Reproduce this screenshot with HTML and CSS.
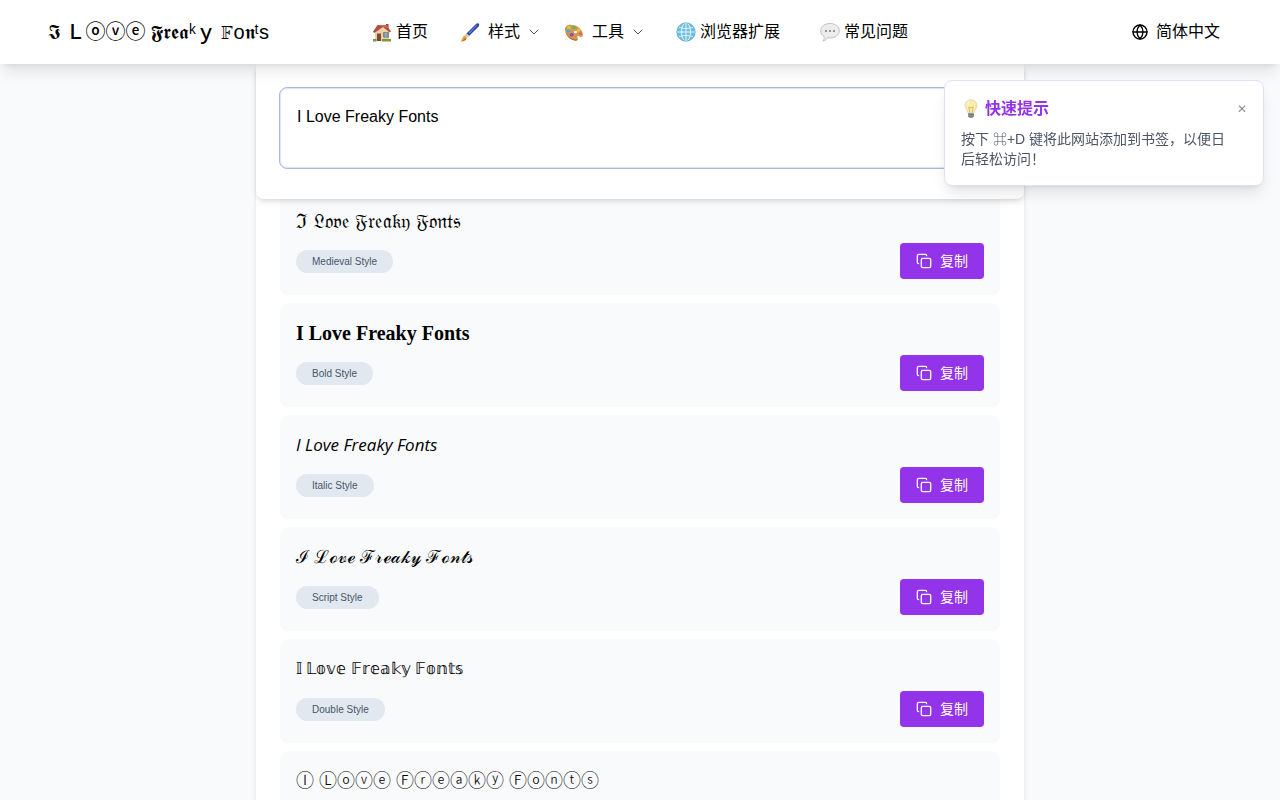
FILE: index.html
```
<!DOCTYPE html>
<html lang="zh-CN">
<head>
  <meta charset="UTF-8">
  <meta name="viewport" content="width=device-width, initial-scale=1.0">
  <title>I Love Freaky Fonts</title>
  <link rel="stylesheet" href="styles.css">
</head>
<body>
  <svg class="sprite" width="0" height="0" aria-hidden="true">
    <symbol id="copy" viewBox="0 0 24 24">
      <rect x="8" y="8" width="14" height="14" rx="2"/>
      <path d="M4 16c-1.1 0-2-.9-2-2V4c0-1.1.9-2 2-2h10c1.1 0 2 .9 2 2"/>
    </symbol>
    <symbol id="chevron" viewBox="0 0 24 24">
      <path d="m4 8 8 8 8-8"/>
    </symbol>
  </svg>

  <header class="header">
    <a class="logo" href="#">𝕴 Ｌⓞⓥⓔ 𝕱𝖗𝖊𝖆ᵏｙ 𝔽o𝖓ᵗs</a>
    <nav class="nav">
      <a class="nav-link" href="#">
        <svg class="emoji" viewBox="0 0 20 20">
          <path fill="#83503f" d="M14 2h2.500v5H14z"/>
          <path fill="#e9d1ab" d="M3 9 9.500 3 17 9v10H3z"/>
          <path fill="#b94b3e" d="M1 9.800 5.500 3h9L19 9.600l-1.200.9L11 5 2.200 11z"/>
          <path fill="#d66b55" d="M5.500 3h9l2 3.200-4-1.200z"/>
          <path fill="#7e4838" d="M5 11.500h4V19H5z"/>
          <path fill="#719aaa" stroke="#806b60" stroke-width=".7" d="M11.500 10.500h5v4.700h-5z"/>
          <path stroke="#d8c9ad" stroke-width=".7" d="M14 10.500v4.700"/>
          <path fill="#789746" d="M1 17h3.500v2.500H1zM10 17h9v2.500h-9z"/>
        </svg>
        首页
      </a>
      <button class="nav-btn" type="button">
        <svg class="emoji" viewBox="0 0 20 20">
          <path fill="#263e9b" d="M6.500 11.500 16 2c1.300-1.200 3.300-.7 3.200 1-.1.900-.6 1.500-1.400 2.300L9 14z"/>
          <path fill="#6682dc" d="m8.500 10.800 7.700-7.700c.8-.7 1.600-.6 1.300 0L9.500 12z"/>
          <path fill="#c9c5bc" d="m4.700 13.200 2-2 2.500 2.500-2 2z"/>
          <path fill="#e8a33c" d="M.8 19.200c1.300-1.300 1.200-4.500 3.900-5.800l2.400 2.400C6 18.500 3.200 19.400.8 19.200z"/>
          <path fill="#b86c20" d="M.8 19.200c1.900-.4 3.200-1.600 4.200-3.400l1.400 1.400c-1.600 1.700-3.500 2.200-5.600 2z"/>
        </svg>
        <span>样式</span>
        <svg class="chevron"><use href="#chevron"/></svg>
      </button>
      <button class="nav-btn" type="button">
        <svg class="emoji" viewBox="0 0 20 20">
          <path fill="#d7954f" d="M1 8C.5 3 6 1.700 10.500 3.300c4.700 1.500 8.600 5.700 8.400 9.500-.1 2.400-2 2.700-3.400 1.700-1.500-1-2.700-.2-2 1.300.9 2-.5 3.200-2.800 2.800C5.600 17.800 1.600 13 1 8z"/>
          <path fill="#ae6c35" d="M1 8c1 4.500 5 8.600 10 9.400 1.200.2 2.200-.1 2.700-.6.100 1.500-1.200 2.100-3 1.800C5.600 17.800 1.600 13 1 8z"/>
          <ellipse cx="5" cy="5.500" rx="2" ry="1.500" fill="#bbd546"/>
          <ellipse cx="10" cy="5.500" rx="2" ry="1.400" fill="#5bb568"/>
          <ellipse cx="4.300" cy="9" rx="1.800" ry="1.500" fill="#42aed3"/>
          <ellipse cx="7.700" cy="12.700" rx="2" ry="1.700" fill="#8a4bb4"/>
          <ellipse cx="14.500" cy="8.300" rx="1.700" ry="1.300" fill="#e9ca42"/>
          <ellipse cx="16.500" cy="11.700" rx="1.300" ry="1.100" fill="#db5746"/>
          <ellipse cx="11.500" cy="10" rx="1.700" ry="1.300" fill="#fff"/>
        </svg>
        <span>工具</span>
        <svg class="chevron"><use href="#chevron"/></svg>
      </button>
      <a class="nav-link" href="#">
        <svg class="emoji" viewBox="0 0 20 20">
          <circle cx="10" cy="10" r="9.200" fill="#70bde0"/>
          <g fill="none" stroke="#e3f5fb" stroke-width="1">
            <ellipse cx="10" cy="10" rx="4.500" ry="9"/>
            <path d="M10 1v18M1 10h18M3 5c4 2 10 2 14 0M3 15c4-2 10-2 14 0"/>
          </g>
          <circle cx="10" cy="10" r="9.200" fill="none" stroke="#4f9fc4" stroke-width=".7"/>
        </svg>
        浏览器扩展
      </a>
      <a class="nav-link" href="#">
        <svg class="emoji" viewBox="0 0 20 20">
          <path fill="#ececec" stroke="#b3b3b3" stroke-width=".8" d="M10 1.500c5.200 0 9.300 3 9.300 7.200s-4 7.300-9.300 7.300c-.9 0-1.700-.1-2.500-.3-1 1.800-2.600 3-4.300 3.200.9-1.200 1.200-2.700.8-4.500C2 13.200.7 11.200.7 8.700.700 4.500 4.800 1.500 10 1.500z"/>
          <g fill="#777"><circle cx="6" cy="9" r="1"/><circle cx="10" cy="9" r="1"/><circle cx="14" cy="9" r="1"/></g>
        </svg>
        常见问题
      </a>
    </nav>
    <button class="lang" type="button">
      <svg class="icon" viewBox="0 0 24 24">
        <circle cx="12" cy="12" r="10.500"/>
        <path d="M1.500 12h21M12 1.500c6 6 6 15 0 21-6-6-6-15 0-21"/>
      </svg>
      简体中文
    </button>
  </header>

  <main class="container">
    <div class="input-panel">
      <textarea class="input" aria-label="输入文字">I Love Freaky Fonts</textarea>
    </div>
    <div class="results">
      <div class="result">
        <p class="preview fraktur">ℑ 𝔏𝔬𝔳𝔢 𝔉𝔯𝔢𝔞𝔨𝔶 𝔉𝔬𝔫𝔱𝔰</p>
        <div class="row">
          <span class="tag">Medieval Style</span>
          <button class="copy" type="button"><svg class="icon"><use href="#copy"/></svg>复制</button>
        </div>
      </div>
      <div class="result">
        <p class="preview bold">I Love Freaky Fonts</p>
        <div class="row">
          <span class="tag">Bold Style</span>
          <button class="copy" type="button"><svg class="icon"><use href="#copy"/></svg>复制</button>
        </div>
      </div>
      <div class="result">
        <p class="preview italic">I Love Freaky Fonts</p>
        <div class="row">
          <span class="tag">Italic Style</span>
          <button class="copy" type="button"><svg class="icon"><use href="#copy"/></svg>复制</button>
        </div>
      </div>
      <div class="result">
        <p class="preview script">ℐ ℒℴ𝓋ℯ ℱ𝓇ℯ𝒶𝓀𝓎 ℱℴ𝓃𝓉𝓈</p>
        <div class="row">
          <span class="tag">Script Style</span>
          <button class="copy" type="button"><svg class="icon"><use href="#copy"/></svg>复制</button>
        </div>
      </div>
      <div class="result">
        <p class="preview double">𝕀 𝕃𝕠𝕧𝕖 𝔽𝕣𝕖𝕒𝕜𝕪 𝔽𝕠𝕟𝕥𝕤</p>
        <div class="row">
          <span class="tag">Double Style</span>
          <button class="copy" type="button"><svg class="icon"><use href="#copy"/></svg>复制</button>
        </div>
      </div>
      <div class="result">
        <p class="preview circled">Ⓘ Ⓛⓞⓥⓔ Ⓕⓡⓔⓐⓚⓨ Ⓕⓞⓝⓣⓢ</p>
        <div class="row">
          <span class="tag">Circled Style</span>
          <button class="copy" type="button"><svg class="icon"><use href="#copy"/></svg>复制</button>
        </div>
      </div>
    </div>
  </main>

  <aside class="tip">
    <div class="tip-head">
      <svg class="emoji" viewBox="0 0 20 20">
        <path fill="#f8edae" stroke="#d8ce9a" stroke-width=".7" d="M10 .7c3.500 0 6 2.500 6 5.800 0 3-2.600 4.300-3 7.500H7c-.4-3.200-3-4.500-3-7.500C4 3.200 6.500.7 10 .7z"/>
        <path fill="none" stroke="#d8ac48" stroke-width=".8" d="M8.800 13.500 7.800 8l1.400 1 .8-1 .8 1 1.400-1-1 5.500"/>
        <path fill="#fffbe5" d="M6 5c.5-1.800 1.700-2.700 3-2.900C8 3.200 7.500 4.500 7.200 6.500z"/>
        <path fill="#949a9b" d="M7.200 14h5.600v3.500L11.500 19h-3l-1.300-1.500z"/>
        <path stroke="#5f6566" stroke-width=".7" d="M7.200 15.500h5.600M7.200 17.200h5.600"/>
      </svg>
      <h2 class="tip-title">快速提示</h2>
      <button class="close" type="button" aria-label="关闭">✕</button>
    </div>
    <p class="tip-text">按下 ⌘+D 键将此网站添加到书签，以便日后轻松访问！</p>
  </aside>
</body>
</html>
```

FILE: styles.css
```
* {
  box-sizing: border-box;
}
body {
  margin: 0;
  background: #f8fafc;
  color: #000;
  font-family: "Liberation Sans", "Noto Sans CJK SC", sans-serif;
  font-size: 16px;
  line-height: 24px;
}
button {
  border: 0;
  background: none;
  color: inherit;
  font: inherit;
  cursor: pointer;
}
a {
  color: inherit;
  text-decoration: none;
}
p,
h2 {
  margin: 0;
}
.sprite {
  display: none;
}
.emoji {
  width: 20px;
  height: 20px;
  flex-shrink: 0;
}
.icon,
.chevron {
  width: 16px;
  height: 16px;
  fill: none;
  stroke: currentColor;
  stroke-width: 2;
  stroke-linecap: round;
  stroke-linejoin: round;
}
.chevron {
  width: 12px;
  height: 12px;
  color: #555;
}

/* header */
.header {
  position: sticky;
  top: 0;
  z-index: 20;
  display: flex;
  align-items: center;
  height: 64px;
  padding: 0 48px;
  background: #fff;
  box-shadow: 0 10px 15px -3px rgba(0, 0, 0, 0.1), 0 4px 6px -4px rgba(0, 0, 0, 0.1);
}
.logo {
  min-width: 228px;
  font-size: 20px;
  font-weight: 500;
  line-height: 28px;
  white-space: nowrap;
}
.nav {
  display: flex;
  align-items: center;
  margin-left: 76px;
}
.nav-link,
.nav-btn,
.lang {
  display: flex;
  align-items: center;
  white-space: nowrap;
}
.nav-link {
  gap: 4px;
  padding: 0 20px;
}
.nav-btn {
  gap: 8px;
  padding: 0 12px;
}
.lang {
  gap: 8px;
  margin-left: auto;
  padding: 0 12px;
}

/* converter */
.container {
  max-width: 768px;
  margin: 0 auto;
  background: #fff;
  box-shadow: 0 4px 6px -1px rgba(0, 0, 0, 0.1), 0 2px 4px -2px rgba(0, 0, 0, 0.1);
}
.input-panel {
  position: sticky;
  top: 64px;
  z-index: 10;
  display: flex;
  padding: 23px 23px 30px;
  background: #fff;
  border-radius: 0 0 8px 8px;
  box-shadow: 0 4px 6px -1px rgba(0, 0, 0, 0.1), 0 2px 4px -2px rgba(0, 0, 0, 0.1);
}
.input {
  flex: 1;
  height: 82px;
  padding: 17px;
  border: 1px solid #a9b9dd;
  border-radius: 8px;
  background: #fff;
  box-shadow: inset 0 0 0 1px #dbe4f8;
  font: inherit;
  outline: none;
  resize: none;
}
.results {
  display: flex;
  flex-direction: column;
  gap: 8px;
  margin-top: -8px;
  padding: 0 24px 24px;
}
.result {
  padding: 16px;
  background: #f8fafc;
  border-radius: 8px;
}
.preview {
  height: 28px;
  margin-bottom: 8px;
  font-size: 18px;
  line-height: 28px;
  white-space: nowrap;
}
.fraktur {
  font-size: 20px;
}
.bold {
  font-family: "Liberation Serif", serif;
  font-size: 20px;
  font-weight: bold;
}
.italic {
  font-family: "Open Sans", "Noto Sans", sans-serif;
  font-size: 17px;
  font-style: italic;
}
.double {
  font-size: 16px;
}
.circled {
  font-weight: 300;
}
.row {
  display: flex;
  align-items: center;
  justify-content: space-between;
}
.tag {
  padding: 4px 16px;
  border-radius: 12px;
  background: #e2e8f0;
  color: #475569;
  font-size: 10px;
  line-height: 15px;
}
.copy {
  display: flex;
  align-items: center;
  gap: 8px;
  height: 36px;
  padding: 0 16px;
  border-radius: 4px;
  background: #9333ea;
  color: #fff;
  font-size: 14px;
}

/* bookmark tip */
.tip {
  position: fixed;
  top: 80px;
  right: 16px;
  z-index: 30;
  width: 320px;
  padding: 16px;
  border: 1px solid #e4dcf8;
  border-radius: 8px;
  background: #fff;
  box-shadow: 0 10px 15px -3px rgba(0, 0, 0, 0.1), 0 4px 6px -4px rgba(0, 0, 0, 0.1);
}
.tip-head {
  display: flex;
  align-items: center;
  gap: 4px;
  margin-bottom: 8px;
}
.tip-title {
  color: #9333ea;
  font-size: 16px;
  line-height: 24px;
}
.close {
  margin-left: auto;
  padding: 0;
  color: #8b8f98;
  font-size: 12px;
}
.tip-text {
  padding-right: 16px;
  color: #4b5563;
  font-size: 14px;
  line-height: 20px;
}
```
